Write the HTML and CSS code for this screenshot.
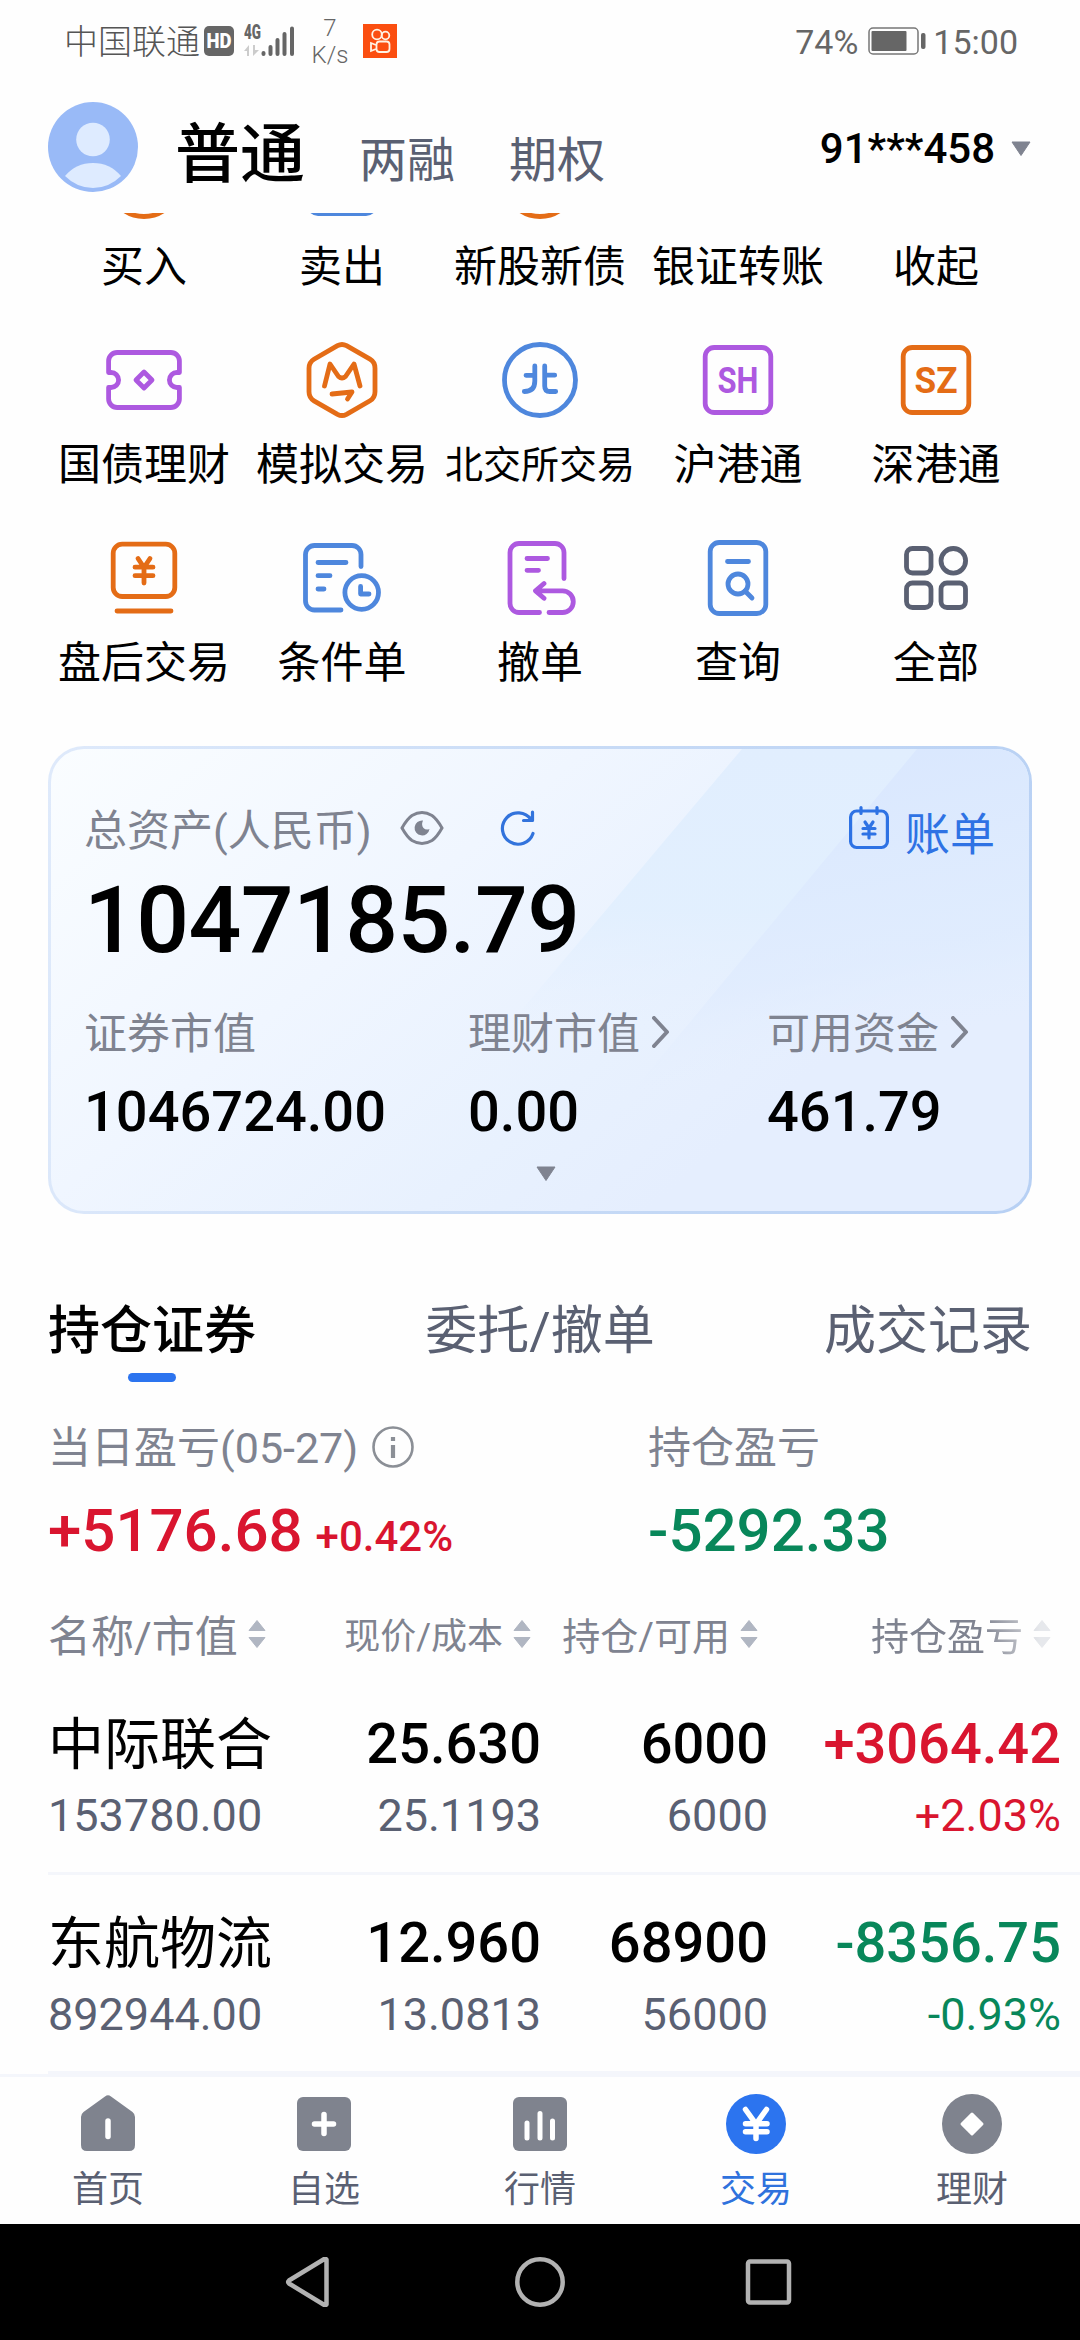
FILE: index.html
```html
<!DOCTYPE html>
<html lang="zh-CN">
<head>
<meta charset="UTF-8">
<title>交易</title>
<link rel="stylesheet" href="styles.css">
</head>
<body>
<div class="page">
	<div class="status">
		<span class="carrier">中国联通</span>
		<svg class="hd" width="30" height="30" viewBox="0 0 30 30">
			<rect width="30" height="30" rx="5" fill="#666"/>
			<text x="2.5" y="22" textLength="25" lengthAdjust="spacingAndGlyphs">HD</text>
		</svg>
		<svg class="signal" width="51" height="40" viewBox="0 -8 51 40">
			<text x="0" y="14" textLength="17" lengthAdjust="spacingAndGlyphs">4G</text>
			<path d="M0 26l5-6v11H3v-5zM9 20h2v5h4l-6 6z" fill="#ccc"/>
			<path d="M19.500 28v1M26.500 22v7M33.500 15v14M40.500 9v20M48 3.500v25.500" stroke="#666" stroke-width="4" stroke-linecap="round"/>
		</svg>
		<span class="speed">7<br>K/s</span>
		<svg class="app" width="34" height="34" viewBox="0 0 34 34">
			<rect width="34" height="34" fill="#fb4e10"/>
			<g fill="none" stroke="#fff3e4" stroke-width="1.800">
				<circle cx="14" cy="10.500" r="4.800"/>
				<circle cx="22.500" cy="11.500" r="3.800"/>
				<rect x="13.500" y="17.500" width="13" height="10.500" rx="3"/>
				<path d="M13 21l-5-2v8l5-2"/>
			</g>
		</svg>
		<span class="battery_num">74%</span>
		<svg class="battery" width="58" height="28" viewBox="0 0 58 28">
			<rect x="1" y="1" width="49" height="26" rx="4" fill="none" stroke="#777" stroke-width="1.500"/>
			<rect x="3.500" y="4" width="35" height="20" rx="1" fill="#666"/>
			<rect x="53" y="6" width="4.500" height="16" rx="2" fill="#666"/>
		</svg>
		<span class="time">15:00</span>
	</div>

	<div class="header">
		<svg class="avatar" width="90" height="90" viewBox="0 0 90 90">
			<circle cx="45" cy="45" r="45" fill="#99baf7"/>
			<circle cx="45" cy="37.500" r="16.800" fill="#deebff"/>
			<path d="M17 74Q28 61 45 61T73 74Q61 86 45 86T17 74z" fill="#deebff"/>
		</svg>
		<div class="kinds">
			<span class="on">普通</span>
			<span>两融</span>
			<span>期权</span>
		</div>
		<div class="account">91***458
			<svg width="22" height="16" viewBox="0 0 22 16"><path d="M2 1h18L11 14.500z" fill="#7f8390" stroke="#7f8390" stroke-linejoin="round"/></svg>
		</div>
	</div>

	<div class="menu">
		<ul>
			<li>
				<svg class="orange" viewBox="0 0 90 90"><circle cx="45" cy="44" r="35.500"/></svg>
				<span>买入</span>
			</li>
			<li>
				<svg class="blue" viewBox="0 0 90 90"><rect x="12" y="10" width="66" height="66.500" rx="9"/></svg>
				<span>卖出</span>
			</li>
			<li>
				<svg class="orange" viewBox="0 0 90 90"><circle cx="45" cy="44" r="35.500"/></svg>
				<span>新股新债</span>
			</li>
			<li>
				<svg class="purple" viewBox="0 0 90 90"><rect x="12" y="12" width="66" height="56" rx="9"/></svg>
				<span>银证转账</span>
			</li>
			<li>
				<svg class="gray" viewBox="0 0 90 90"><path d="M20 55l25-25 25 25"/></svg>
				<span>收起</span>
			</li>
			<li>
				<svg class="purple" viewBox="0 0 90 90">
					<path d="M9.600 37.500V26a8.500 8.500 0 0 1 8.500-8.500h53.800a8.500 8.500 0 0 1 8.500 8.500v11.500h-2.500a7.500 7.500 0 0 0 0 15h2.500V64a8.500 8.500 0 0 1-8.500 8.500H18.100A8.500 8.500 0 0 1 9.600 64V52.500h2.500a7.500 7.500 0 0 0 0-15z"/>
					<path d="M45 37l8 8-8 8-8-8z"/>
				</svg>
				<span>国债理财</span>
			</li>
			<li>
				<svg class="orange" viewBox="0 0 90 90">
					<path d="M40.500 10.700q4.500-2.400 9 0L73 24.200q5 3 5 9v23.600q0 6-5 9L49.500 79.300q-4.500 2.400-9 0L17 65.800q-5-3-5-9V33.200q0-6 5-9z"/>
					<path d="M27.500 51L33 29l8.500 12.500q3.500 3 7 0L57 29l6 22M35 59l20-2-4.500 7"/>
				</svg>
				<span>模拟交易</span>
			</li>
			<li>
				<svg class="blue" viewBox="0 0 90 90">
					<circle cx="45" cy="45" r="35.500"/>
					<path d="M39.800 31v15q0 10.500-10.500 10.500M31 40.300h8.500M49.700 31v20q0 5.500 5 5.500h6M49.700 40.200h10"/>
				</svg>
				<span class="small">北交所交易</span>
			</li>
			<li>
				<svg class="purple" viewBox="0 0 90 90">
					<rect x="12.200" y="12.500" width="65.600" height="65" rx="9"/>
					<text x="24.500" y="58" textLength="41" lengthAdjust="spacingAndGlyphs">SH</text>
				</svg>
				<span>沪港通</span>
			</li>
			<li>
				<svg class="orange" viewBox="0 0 90 90">
					<rect x="12.200" y="12.500" width="65.600" height="65" rx="9"/>
					<text x="23.500" y="58" textLength="43" lengthAdjust="spacingAndGlyphs">SZ</text>
				</svg>
				<span>深港通</span>
			</li>
			<li>
				<svg class="orange" viewBox="0 0 90 90">
					<rect x="14.200" y="11.200" width="61.600" height="52.300" rx="9"/>
					<path d="M18 78h54M39 25.500l6 9 6-9M36 34.200h18M36 42.700h18M45 34v16"/>
				</svg>
				<span>盘后交易</span>
			</li>
			<li>
				<svg class="blue" viewBox="0 0 90 90">
					<path d="M64 33.500V21.500a9 9 0 0 0-9-9H17.500a9 9 0 0 0-9 9V68a9 9 0 0 0 9 9H44M21 29.500h28M21 42.700h12M21 56h6"/>
					<circle cx="64.700" cy="59.500" r="16.800"/>
					<path d="M63.600 53.500v7.500H72"/>
				</svg>
				<span>条件单</span>
			</li>
			<li>
				<svg class="purple" viewBox="0 0 90 90">
					<path d="M69 45.500V19.500a9 9 0 0 0-9-9H24a9 9 0 0 0-9 9v51a9 9 0 0 0 9 9h20.500M32 25.500h20.500M32 37.300h11.500M54 79.500h13.500a10.800 10.800 0 0 0 0-21.600H41M49 50.500l-8.500 7.400 8.500 7.400"/>
				</svg>
				<span>撤单</span>
			</li>
			<li>
				<svg class="blue" viewBox="0 0 90 90">
					<rect x="17.200" y="9.500" width="55.600" height="71" rx="9"/>
					<path d="M34.500 28.500h21M52 58l7 7"/>
					<circle cx="45" cy="51" r="10"/>
				</svg>
				<span>查询</span>
			</li>
			<li>
				<svg class="gray" viewBox="0 0 90 90">
					<rect x="15.500" y="15.500" width="24.500" height="24.500" rx="6"/>
					<circle cx="62.300" cy="27.800" r="12.300"/>
					<rect x="15.500" y="50" width="24.500" height="24.500" rx="6"/>
					<rect x="50" y="50" width="24.500" height="24.500" rx="6"/>
				</svg>
				<span>全部</span>
			</li>
		</ul>
	</div>

	<div class="card">
		<!-- 斜向光带 -->
		<svg class="shine" width="978" height="462" viewBox="0 0 978 462">
			<defs>
				<linearGradient id="band1" x1="0" y1="0" x2="0" y2="1">
					<stop offset="0" stop-color="#e1eefe"/>
					<stop offset=".35" stop-color="#e1effe" stop-opacity=".9"/>
					<stop offset=".6" stop-color="#e3eefe" stop-opacity="0"/>
				</linearGradient>
				<linearGradient id="band2" x1=".4" y1="0" x2=".6" y2="1">
					<stop offset="0" stop-color="#d9e7fe"/>
					<stop offset=".5" stop-color="#dfebfe" stop-opacity=".7"/>
					<stop offset=".68" stop-color="#e4eefe" stop-opacity="0"/>
				</linearGradient>
			</defs>
			<path d="M691 0h287v462H301z" fill="url(#band1)"/>
			<path d="M866 0h112v462H482z" fill="url(#band2)"/>
		</svg>
		<div class="card_top">
			<span class="label">总资产(人民币)</span>
			<svg class="eye" width="44" height="36" viewBox="0 0 44 36">
				<path d="M2 18Q7 9 12 5.500 22-.5 32 5.500 37 9 42 18 37 27 32 30.500 22 36.500 12 30.500 7 27 2 18z" fill="none" stroke="#7f8390" stroke-width="3"/>
				<path d="M23 10.500a7.500 7.500 0 1 0 6.500 8.500q-3.500 1.500-6-1-2.500-3-.5-7.500z" fill="#7f8390"/>
			</svg>
			<svg class="refresh" width="36" height="36" viewBox="0 0 36 36">
				<path d="M33 23.500A15.700 15.700 0 1 1 31 9.500M32.500 2v8.500H23.500" fill="none" stroke="#3273dc" stroke-width="3.200" stroke-linecap="round" stroke-linejoin="round"/>
			</svg>
			<div class="bill">
				<svg width="40" height="46" viewBox="0 0 40 46">
					<g fill="none" stroke="#2e72e4" stroke-width="3.200" stroke-linecap="round">
						<rect x="1.600" y="6" width="36.800" height="36.500" rx="6"/>
						<path d="M12 2.500v6M28 2.500v6M16 17l4 6 4-6M14 23.500h12M14 29h12M20 23v10"/>
					</g>
				</svg>
				账单
			</div>
		</div>
		<div class="total">1047185.79</div>
		<div class="parts">
			<div>
				<p class="label">证券市值</p>
				<p class="num">1046724.00</p>
			</div>
			<div>
				<p class="label">理财市值<svg width="18" height="32" viewBox="0 0 18 32"><path d="M2 2l13 14L2 30"/></svg></p>
				<p class="num">0.00</p>
			</div>
			<div>
				<p class="label">可用资金<svg width="18" height="32" viewBox="0 0 18 32"><path d="M2 2l13 14L2 30"/></svg></p>
				<p class="num">461.79</p>
			</div>
		</div>
		<svg class="more" width="22" height="16" viewBox="0 0 22 16"><path d="M2 1h18L11 14.500z" fill="#7f8390" stroke="#7f8390" stroke-linejoin="round"/></svg>
	</div>

	<div class="tabs">
		<span class="on">持仓证券</span>
		<span>委托/撤单</span>
		<span>成交记录</span>
	</div>

	<div class="profit">
		<div>
			<p class="label">当日盈亏(05-27)
				<svg width="42" height="42" viewBox="0 0 42 42">
					<circle cx="21" cy="21" r="19.500" fill="none" stroke="#8b8f96" stroke-width="2.600"/>
					<path d="M21 11v4M21 19v13" stroke="#8b8f96" stroke-width="4.200"/>
				</svg>
			</p>
			<p class="num red">+5176.68<small>+0.42%</small></p>
		</div>
		<div>
			<p class="label">持仓盈亏</p>
			<p class="num green">-5292.33</p>
		</div>
	</div>

	<div class="table">
		<div class="row head">
			<div class="first">名称/市值<svg class="sort" viewBox="0 0 18 28"><path d="M9 .5l8 10H1zM9 27.500l-8-10h16z"/></svg></div>
			<div class="price">现价/成本<svg class="sort" viewBox="0 0 18 28"><path d="M9 .5l8 10H1zM9 27.500l-8-10h16z"/></svg></div>
			<div>持仓/可用<svg class="sort" viewBox="0 0 18 28"><path d="M9 .5l8 10H1zM9 27.500l-8-10h16z"/></svg></div>
			<div class="fade">持仓盈亏<svg class="sort" viewBox="0 0 18 28"><path d="M9 .5l8 10H1zM9 27.500l-8-10h16z"/></svg></div>
		</div>
		<div class="row">
			<div><b class="name">中际联合</b><i>153780.00</i></div>
			<div><b>25.630</b><i>25.1193</i></div>
			<div><b>6000</b><i>6000</i></div>
			<div class="red"><b>+3064.42</b><i>+2.03%</i></div>
		</div>
		<div class="row">
			<div><b class="name">东航物流</b><i>892944.00</i></div>
			<div><b>12.960</b><i>13.0813</i></div>
			<div><b>68900</b><i>56000</i></div>
			<div class="green"><b>-8356.75</b><i>-0.93%</i></div>
		</div>
	</div>

	<ul class="nav">
		<li>
			<svg viewBox="0 0 60 60"><path d="M27 2.500q3-2.500 6 0L54.500 18q2.500 2 2.500 5v28q0 6-6 6H9q-6 0-6-6V23q0-3 2.500-5z"/><path class="line" d="M30 27v15.500"/></svg>
			<span>首页</span>
		</li>
		<li>
			<svg viewBox="0 0 60 60"><rect x="3" y="3" width="54" height="54" rx="6"/><path class="line" d="M30 20.500v19M20.500 30h19"/></svg>
			<span>自选</span>
		</li>
		<li>
			<svg viewBox="0 0 60 60"><rect x="3" y="3" width="54" height="54" rx="6"/><path class="line thin" d="M17 29v15M30 19.500V44M42.500 27v17"/></svg>
			<span>行情</span>
		</li>
		<li class="on">
			<svg viewBox="0 0 60 60"><circle cx="30" cy="30" r="30"/><path class="line" d="M19.500 15.500L30 30l10.500-14.500M19.500 29.700h21.500M19.500 37.800h21.500M30 30v14.500"/></svg>
			<span>交易</span>
		</li>
		<li>
			<svg viewBox="0 0 60 60"><circle cx="30" cy="30" r="30"/><path class="dot" d="M30 20l10 10-10 10-10-10z"/></svg>
			<span>理财</span>
		</li>
	</ul>

	<div class="system">
		<svg viewBox="0 0 50 50"><path d="M41.500 2.500v45q-1.500 1.500-3 0L4 26.500q-1.500-1.500 0-3L38.500 2.500q1.500-1.500 3 0z"/></svg>
		<svg viewBox="0 0 50 50"><circle cx="25" cy="25" r="22.700"/></svg>
		<svg viewBox="0 0 50 50"><rect x="3" y="4.500" width="41" height="41" rx="2"/></svg>
	</div>
</div>
</body>
</html>
```

FILE: styles.css
```css
*{margin: 0;padding: 0;box-sizing: border-box;}
ul{list-style: none;}
i{font-style: normal;}
svg{display: block;flex: none;}
body{
	background: #fefefe;
	font-family: Roboto, "Noto Sans CJK SC", sans-serif;
	color: #000;
}
.page{
	width: 1080px;
	height: 2340px;
	display: flex;
	flex-direction: column;
	overflow: hidden;
}
.page > *{flex: none;}
.red{color: #d9152f;}
.green{color: #08875a;}
.label{
	font-size: 43px;
	line-height: 60px;
	color: #7f8390;
}

/*状态栏*/
.status{
	height: 84px;
	padding: 0 62px 0 64px;
	display: flex;
	align-items: center;
	color: #666;
	font-size: 34px;
	line-height: 40px;
}
.carrier,.speed{font-weight: 300;}
.carrier{color: #555;}
.hd{margin: -2px 0 0 4px;}
.hd text{
	font-size: 20px;
	font-weight: 900;
	fill: #fff;
}
.signal{margin: -10px 0 0 10px;}
.signal text{
	font-size: 20px;
	font-weight: 900;
	fill: #666;
}
.speed{
	width: 40px;
	margin-left: 15px;
	font-size: 24px;
	line-height: 27px;
	text-align: center;
}
.app{margin: -2px 0 0 13px;}
.battery_num{margin-left: auto;}
.battery{margin: -2px 7px 0 10px;}

/*头部*/
.header{
	height: 129px;
	padding: 18px 48px 0;
	display: flex;
}
.kinds{
	padding-top: 8px;
	margin-left: 37px;
	display: flex;
	align-items: baseline;
	gap: 54px;
	font-size: 48px;
	line-height: 90px;
	color: #5a6072;
}
.kinds .on{
	font-size: 65px;
	font-weight: 500;
	color: #000;
}
.account{
	margin-left: auto;
	display: flex;
	align-items: center;
	gap: 15px;
	height: 90px;
	padding-top: 3px;
	font-size: 42px;
	font-weight: 500;
}

/*功能菜单*/
.menu{
	height: 533px;
	overflow: hidden;
}
.menu ul{
	margin: -76px 45px 0;
	display: grid;
	grid-template-columns: repeat(5, 198px);
	grid-auto-rows: 198px;
}
.menu li{
	display: flex;
	flex-direction: column;
	align-items: center;
}
.menu svg{
	width: 90px;
	height: 90px;
	fill: none;
	stroke-width: 4.8px;
	stroke-linecap: round;
	stroke-linejoin: round;
}
.menu svg text{
	font-size: 37px;
	font-weight: 700;
	stroke: none;
}
.menu span{
	margin-top: 10px;
	font-size: 43px;
	line-height: 60px;
	white-space: nowrap;
}
.menu .small{font-size: 38px;}
.orange{stroke: #e46c16;}
.orange text{fill: #e46c16;}
.blue{stroke: #4e87dd;}
.purple{stroke: #ad59e0;}
.purple text{fill: #ad59e0;}
.gray{stroke: #5a6072;}

/*资产卡片*/
.card{
	position: relative;
	height: 468px;
	margin: 0 48px;
	padding: 52px 34px 0 33px;
	border: 3px solid transparent;
	border-radius: 36px;
	background: linear-gradient(140deg, #fafdff 0%, #f0f6ff 35%, #e8f1fe 60%, #e5eefe 75%) padding-box, linear-gradient(100deg, #dfeafb, #c8dbf6 50%, #b7d0f4) border-box;
}
.shine{
	position: absolute;
	left: 0;
	top: 0;
	border-radius: 33px;
}
.card_top,.total,.parts{position: relative;}
.card_top{
	display: flex;
	align-items: center;
	height: 60px;
}
.eye{margin: -6px 0 0 28px;}
.refresh{margin: -6px 0 0 56px;}
.bill{
	margin-left: auto;
	display: flex;
	align-items: center;
	gap: 16px;
	font-size: 45px;
	color: #2e72e4;
}
.bill svg{margin-top: -6px;}
.total{
	margin-top: 5px;
	font-size: 93px;
	line-height: 110px;
	font-weight: 500;
	letter-spacing: -.6px;
}
.parts{
	margin-top: 28px;
	display: grid;
	grid-template-columns: 384px 299px auto;
}
.parts .label{
	display: flex;
	align-items: center;
	gap: 12px;
}
.parts .label svg{
	margin-top: -5px;
	fill: none;
	stroke: #7f8390;
	stroke-width: 4px;
	stroke-linecap: round;
	stroke-linejoin: round;
}
.parts .num{
	margin-top: 18px;
	font-size: 56px;
	line-height: 60px;
	font-weight: 500;
}
.more{
	position: relative;
	margin: 24px 0 0 451px;
}

/*持仓标签*/
.tabs{
	margin: 83px 48px 0;
	display: flex;
	justify-content: space-between;
	height: 85px;
	font-size: 52px;
	line-height: 70px;
	color: #5a6072;
}
.tabs .on{
	font-weight: 500;
	color: #000;
}
.tabs .on::after{
	content: "";
	display: block;
	width: 48px;
	height: 9px;
	margin: 6px auto 0;
	border-radius: 5px;
	background: #2c74ef;
}

/*盈亏*/
.profit{
	height: 148px;
	margin: 36px 48px 0;
	display: grid;
	grid-template-columns: 600px auto;
}
.profit .label{
	display: flex;
	align-items: center;
	gap: 14px;
}
.profit .label svg{margin-top: -3px;}
.profit .num{
	margin-top: 18px;
	font-size: 60px;
	line-height: 70px;
	font-weight: 500;
}
.profit small{
	margin-left: 13px;
	font-size: 42px;
	line-height: 40px;
}

/*持仓列表*/
.table{
	margin-top: 41px;
	padding-left: 48px;
}
.row{
	height: 199px;
	padding-top: 35px;
	display: grid;
	grid-template-columns: 252px 241px 227px 293px;
	border-bottom: 3px solid #f4f6fb;
	text-align: right;
}
.row > :first-child{text-align: left;}
.row b,.row i{display: block;}
.row b{
	font-size: 56px;
	line-height: 66px;
	font-weight: 500;
}
.row .name{
	line-height: 69px;
	margin-bottom: -3px;
	font-weight: 400;
}
.row i{
	margin-top: 14px;
	font-size: 45px;
	line-height: 50px;
	color: #5a6072;
}
.row .red i,.row .green i{color: inherit;}
.row.head{
	height: 60px;
	margin-bottom: 9px;
	padding: 0;
	border: 0;
	font-size: 38px;
	line-height: 60px;
	color: #7f8390;
}
.head div{
	display: flex;
	align-items: center;
	justify-content: flex-end;
	gap: 10px;
	padding-right: 10px;
	white-space: nowrap;
}
.head .first{
	justify-content: flex-start;
	font-size: 43px;
}
.head .price{font-size: 36px;}
.head .fade{
	-webkit-mask-image: linear-gradient(90deg, #000 calc(100% - 80px), rgba(0,0,0,.3) calc(100% - 20px));
	mask-image: linear-gradient(90deg, #000 calc(100% - 80px), rgba(0,0,0,.3) calc(100% - 20px));
}
.sort{
	width: 18px;
	height: 28px;
	margin-top: -6px;
	overflow: visible;
	fill: #b0b6c2;
	stroke: #b0b6c2;
	stroke-linejoin: round;
}

/*底部导航*/
.nav{
	height: 150px;
	display: flex;
	border-top: 3px solid #f4f6fb;
	padding-top: 17px;
	font-size: 36px;
	line-height: 44px;
	color: #5a6072;
}
.nav li{
	flex: 1;
	display: flex;
	flex-direction: column;
	align-items: center;
	gap: 14px;
}
.nav svg{
	width: 60px;
	height: 60px;
	fill: #7f838e;
}
.nav .line{
	fill: none;
	stroke: #fff;
	stroke-width: 5.5px;
	stroke-linecap: round;
}
.nav .thin{stroke-width: 5px;}
.nav .dot{
	fill: #fff;
	stroke: #fff;
	stroke-width: 3px;
	stroke-linejoin: round;
}
.nav .on{color: #2f72dd;}
.nav .on svg{fill: #2c74ef;}

/*系统按键*/
.system{
	height: 116px;
	display: flex;
	justify-content: center;
	align-items: center;
	gap: 180px;
	background: #000;
}
.system svg{
	width: 50px;
	height: 50px;
	fill: none;
	stroke: #b2b2b2;
	stroke-width: 4.5px;
	stroke-linejoin: round;
}
```
